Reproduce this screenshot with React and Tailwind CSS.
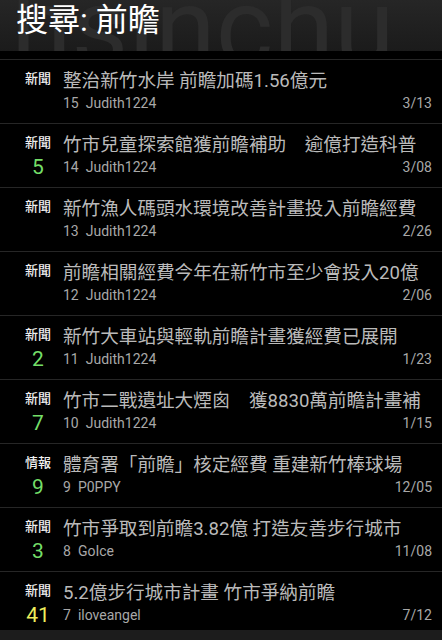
import React from 'react';

const posts = [
  { tag: '新聞', push: '', title: '整治新竹水岸 前瞻加碼1.56億元', no: 15, author: 'Judith1224', date: '3/13' },
  { tag: '新聞', push: '5', title: '竹市兒童探索館獲前瞻補助　逾億打造科普', no: 14, author: 'Judith1224', date: '3/08' },
  { tag: '新聞', push: '', title: '新竹漁人碼頭水環境改善計畫投入前瞻經費', no: 13, author: 'Judith1224', date: '2/26' },
  { tag: '新聞', push: '', title: '前瞻相關經費今年在新竹市至少會投入20億', no: 12, author: 'Judith1224', date: '2/06' },
  { tag: '新聞', push: '2', title: '新竹大車站與輕軌前瞻計畫獲經費已展開', no: 11, author: 'Judith1224', date: '1/23' },
  { tag: '新聞', push: '7', title: '竹市二戰遺址大煙囪　獲8830萬前瞻計畫補', no: 10, author: 'Judith1224', date: '1/15' },
  { tag: '情報', push: '9', title: '體育署「前瞻」核定經費 重建新竹棒球場', no: 9, author: 'P0PPY', date: '12/05' },
  { tag: '新聞', push: '3', title: '竹市爭取到前瞻3.82億 打造友善步行城市', no: 8, author: 'GoIce', date: '11/08' },
  { tag: '新聞', push: '41', title: '5.2億步行城市計畫 竹市爭納前瞻', no: 7, author: 'iloveangel', date: '7/12' },
];

function PostRow({ post }) {
  const hot = Number(post.push) >= 10;
  return (
    <div className="flex h-[64px] shrink-0 border-b border-[#262626] bg-black">
      <div className="ml-[13px] flex w-[50px] shrink-0 flex-col items-center pt-[11px]">
        <span className="text-[13px] leading-[16px] font-medium text-[#f0f0f0]">{post.tag}</span>
        {post.push && (
          <span className={`mt-[4px] text-[21px] leading-[24px] ${hot ? 'text-[#eeee5c]' : 'text-[#74de68]'}`}>
            {post.push}
          </span>
        )}
      </div>
      <div className="flex min-w-0 flex-1 flex-col pt-[10px] pr-[10px]">
        <div className="overflow-hidden whitespace-nowrap text-[18.6px] leading-[22px] text-[#bababa]">
          {post.title}
        </div>
        <div className="mt-[2px] flex items-center text-[14px] leading-[18px] text-[#a8a8a8]">
          <span>{post.no}</span>
          <span className="ml-[7px]">{post.author}</span>
          <span className="ml-auto">{post.date}</span>
        </div>
      </div>
    </div>
  );
}

export default function App() {
  return (
    <div
      className="flex h-[640px] w-[442px] flex-col overflow-hidden bg-black"
      style={{ fontFamily: 'Roboto, "Noto Sans CJK TC", sans-serif' }}
    >
      <div className="relative h-[51px] shrink-0 overflow-hidden bg-gradient-to-b from-[#262626] to-[#1b1b1b]">
        <span className="absolute left-[11px] top-[-27px] select-none text-[110px] leading-[110px] text-[#2c2c2c]">
          hsinchu
        </span>
        <h1 className="relative pl-[16px] pt-[1px] text-[32px] leading-[38px] text-white">搜尋: 前瞻</h1>
      </div>
      <div className="h-[9px] shrink-0 border-b border-[#262626] bg-black" />
      <div className="flex flex-1 flex-col overflow-hidden">
        {posts.map((post) => (
          <PostRow key={post.no} post={post} />
        ))}
      </div>
      <div className="h-[10px] shrink-0 bg-[#1c1c1c]" />
    </div>
  );
}
